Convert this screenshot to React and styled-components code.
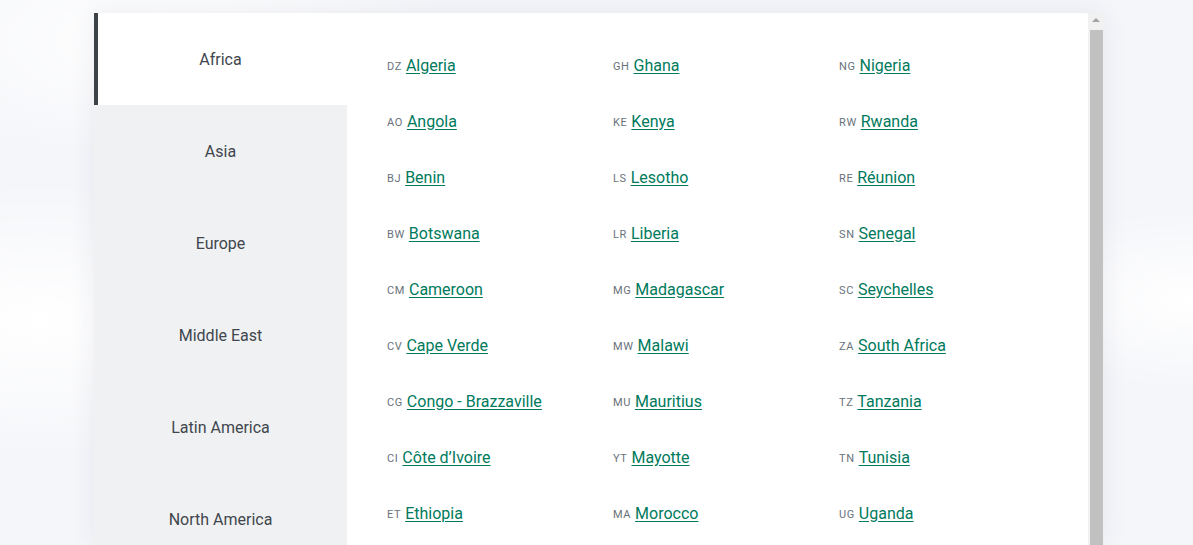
import React from "react";
import styled, {createGlobalStyle} from "styled-components";

const GlobalStyle = createGlobalStyle`
  html, body {
    margin: 0;
    height: 100%;
    overflow: hidden;
  }
  body {
    font-family: Roboto, "Liberation Sans", sans-serif;
    background:
      radial-gradient(ellipse 260px 140px at 40px 320px, #ffffff 0%, rgba(255,255,255,0) 100%),
      radial-gradient(ellipse 300px 120px at 160px 40px, #ffffff 0%, rgba(255,255,255,0) 100%),
      radial-gradient(ellipse 200px 90px at 1190px 300px, #ffffff 0%, rgba(255,255,255,0) 100%),
      #f5f6fa;
  }
`;

const Page = styled.div`
  padding: 13px 0 0 94px;
`;

const Panel = styled.div`
  display: flex;
  width: 1009px;
  height: 532px;
  background: #fff;
  box-shadow: 0 0 24px rgba(40, 50, 80, 0.08);
`;

const Sidebar = styled.nav`
  display: flex;
  flex-direction: column;
  width: 253px;
  flex-shrink: 0;
  overflow: hidden;
  background: #f0f1f3;
`;

const Tab = styled.div`
  display: flex;
  align-items: center;
  justify-content: center;
  flex-shrink: 0;
  height: 92px;
  font-size: 16px;
  color: #41464d;
  background: ${props => props.active ? "#fff" : "transparent"};
  border-left: 4px solid ${props => props.active ? "#3d4246" : "transparent"};
  box-sizing: border-box;
  padding-right: 4px;
  cursor: pointer;
`;

const Countries = styled.ul`
  flex: 1;
  display: grid;
  grid-template-columns: repeat(3, 226px);
  grid-auto-flow: column;
  grid-template-rows: repeat(9, 56px);
  align-content: start;
  margin: 0;
  padding: 24px 0 0 40px;
  list-style: none;
`;

const Country = styled.li`
  display: flex;
  align-items: center;
  gap: 4px;
`;

const Code = styled.span`
  font-size: 11px;
  color: #69727b;
  text-transform: uppercase;
  letter-spacing: 0.6px;
  padding-top: 2px;
`;

const Link = styled.a`
  font-size: 16px;
  color: #007a5c;
  text-decoration: underline;
  text-underline-offset: 2px;
  cursor: pointer;
`;

const Scrollbar = styled.div`
  display: flex;
  flex-direction: column;
  align-items: flex-end;
  width: 15px;
  flex-shrink: 0;
  background: #f1f1f1;
`;

const Arrow = styled.div`
  align-self: center;
  width: 0;
  height: 0;
  margin: 5px 0 6px;
  border-left: 4px solid transparent;
  border-right: 4px solid transparent;
  border-bottom: 4px solid #a3a3a3;
`;

const Thumb = styled.div`
  width: 13px;
  flex: 1;
  background: #c1c1c1;
  margin-top: 2px;
`;

const regions = ["Africa", "Asia", "Europe", "Middle East", "Latin America", "North America"];

const africa = [
  ["dz", "Algeria"], ["ao", "Angola"], ["bj", "Benin"], ["bw", "Botswana"], ["cm", "Cameroon"],
  ["cv", "Cape Verde"], ["cg", "Congo - Brazzaville"], ["ci", "Côte d’Ivoire"], ["et", "Ethiopia"],
  ["gh", "Ghana"], ["ke", "Kenya"], ["ls", "Lesotho"], ["lr", "Liberia"], ["mg", "Madagascar"],
  ["mw", "Malawi"], ["mu", "Mauritius"], ["yt", "Mayotte"], ["ma", "Morocco"],
  ["ng", "Nigeria"], ["rw", "Rwanda"], ["re", "Réunion"], ["sn", "Senegal"], ["sc", "Seychelles"],
  ["za", "South Africa"], ["tz", "Tanzania"], ["tn", "Tunisia"], ["ug", "Uganda"],
];

export default class App extends React.Component {
  render() {
    return (
      <React.Fragment>
        <GlobalStyle />
        <Page>
          <Panel>
            <Sidebar>
              {regions.map((name, i) => (
                <Tab key={name} active={i === 0}>{name}</Tab>
              ))}
            </Sidebar>
            <Countries>
              {africa.map(([code, name]) => (
                <Country key={code}>
                  <Code>{code}</Code>
                  <Link>{name}</Link>
                </Country>
              ))}
            </Countries>
            <Scrollbar>
              <Arrow />
              <Thumb />
            </Scrollbar>
          </Panel>
        </Page>
      </React.Fragment>
    );
  }
}
